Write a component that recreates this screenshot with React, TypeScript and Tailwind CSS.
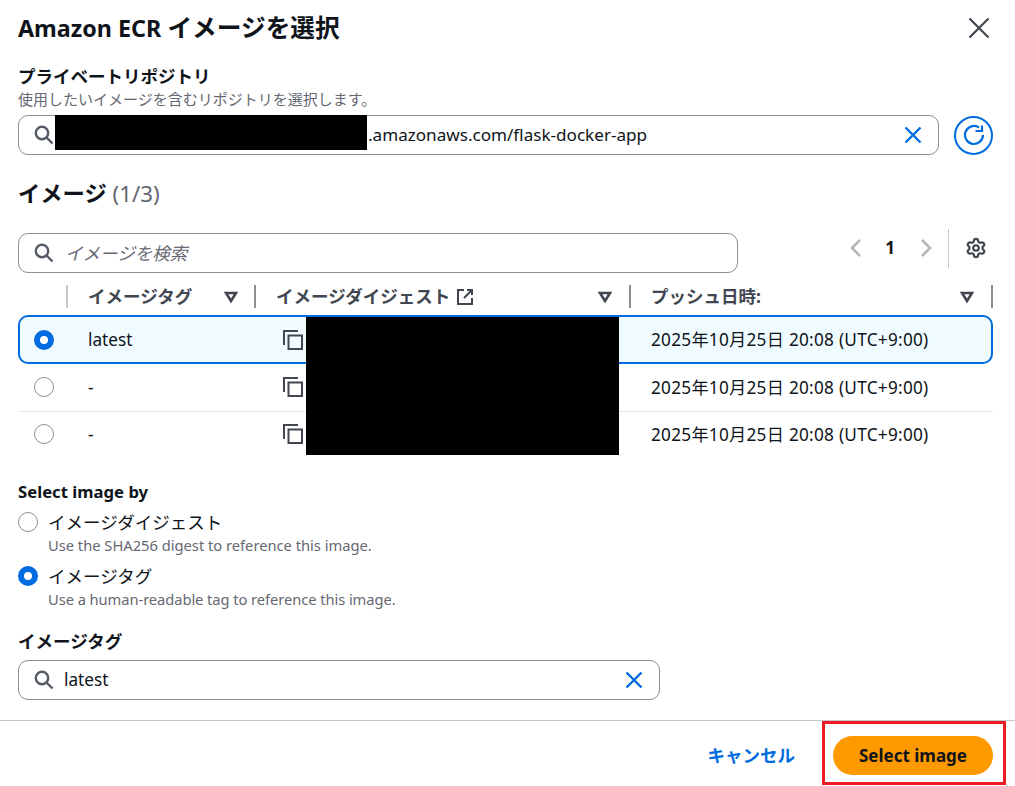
import { Settings } from "lucide-react";

const font = '"Noto Sans", "Noto Sans CJK JP", sans-serif';

function SearchIcon() {
  return (
    <svg width="20" height="20" viewBox="0 0 20 20" fill="none" stroke="#545b64" strokeWidth="2.4" className="shrink-0">
      <circle cx="8" cy="8" r="6.2" />
      <path d="M12.5 12.5 L18.5 18.5" />
    </svg>
  );
}

function ClearIcon() {
  return (
    <svg width="20" height="20" viewBox="0 0 20 20" fill="none" stroke="#006ce0" strokeWidth="2.4" className="shrink-0">
      <path d="M2.5 2.5 L17.5 17.5 M17.5 2.5 L2.5 17.5" />
    </svg>
  );
}

function SortIcon() {
  return (
    <svg width="14" height="12" viewBox="0 0 14 12" fill="none" stroke="#424650" strokeWidth="2.6" className="shrink-0">
      <path d="M2 2 H12 L7 10 Z" />
    </svg>
  );
}

function CopyIcon() {
  return (
    <svg width="20" height="20" viewBox="0 0 20 20" fill="none" stroke="#424650" strokeWidth="2" className="shrink-0">
      <path d="M1 15 V1 H15" />
      <rect x="5.5" y="5.5" width="13.5" height="13.5" />
    </svg>
  );
}

function Radio({ checked }: { checked?: boolean }) {
  if (checked) {
    return <span className="block h-5 w-5 shrink-0 rounded-full border-[6px] border-[#006ce0] bg-white" />;
  }
  return <span className="block h-5 w-5 shrink-0 rounded-full border border-[#8c8c94] bg-white" />;
}

function Divider({ light }: { light?: boolean }) {
  return <span className={`block h-[23px] w-[2px] shrink-0 ${light ? "bg-[#c6c6cd]" : "bg-[#8c8c94]"}`} />;
}

function Row({ tag, selected, last }: { tag: string; selected?: boolean; last?: boolean }) {
  return (
    <div
      className={`grid grid-cols-[49px_188px_375px_1fr] items-center text-[17.2px] text-[#0f141a] ${
        selected
          ? "h-[49px] rounded-[10px] border-2 border-[#006ce0] bg-[#f0fbff]"
          : last
            ? "h-[46px] pb-[2px]"
            : "h-[48px] border-b border-[#e8e8ea] pb-px"
      }`}
    >
      <div className={`flex ${selected ? "pl-[14px]" : "pl-[16px]"}`}>
        <Radio checked={selected} />
      </div>
      <div className={`pt-px ${selected ? "pl-[19px]" : "pl-[21px]"}`}>{tag}</div>
      <div className={`flex ${selected ? "pl-[26px]" : "pl-[28px]"}`}>
        <CopyIcon />
      </div>
      <div className={`whitespace-nowrap pt-px tracking-[0.27px] ${selected ? "pl-[19px]" : "pl-[21px]"}`}>
        2025年10月25日 20:08 (UTC+9:00)
      </div>
    </div>
  );
}

export default function App() {
  return (
    <div className="relative flex h-[786px] w-[1015px] flex-col overflow-hidden bg-white" style={{ fontFamily: font }}>
      {/* Header */}
      <div className="flex h-[56px] shrink-0 items-center justify-between pl-[18px] pr-[25px]">
        <h1 className="text-[23.3px] font-bold leading-none text-[#0f141a]">
          Amazon ECR <span className="text-[24.7px]">イメージを選択</span>
        </h1>
        <svg width="22" height="22" viewBox="0 0 22 22" fill="none" stroke="#424650" strokeWidth="2.2">
          <path d="M1.5 1.5 L20.5 20.5 M20.5 1.5 L1.5 20.5" />
        </svg>
      </div>

      <div className="flex flex-col px-[18px]">
        {/* Repository */}
        <div className="mt-[8px] text-[17.5px] font-bold leading-[24px] text-[#0f141a]">プライベートリポジトリ</div>
        <div className="mt-[3px] text-[15px] leading-[16px] text-[#656871]">使用したいイメージを含むリポジトリを選択します。</div>
        <div className="mt-[8px] flex items-center gap-[15px]">
          <div className="flex h-[40px] w-[921px] items-center justify-between rounded-[10px] border border-[#8c8c94] pl-[15px] pr-[15px]">
            <div className="flex items-center">
              <SearchIcon />
              <span className="ml-[314px] text-[17.1px] text-[#0f141a]">.amazonaws.com/flask-docker-app</span>
            </div>
            <ClearIcon />
          </div>
          <div className="flex h-[39px] w-[39px] items-center justify-center rounded-full border-2 border-[#006ce0]">
            <svg width="22" height="22" viewBox="0 0 22 22" fill="none" stroke="#006ce0" strokeWidth="2.2">
              <path d="M20 11 A9 9 0 1 1 16 3.5" />
              <path d="M12.5 7 H19 V1.5" />
            </svg>
          </div>
        </div>

        {/* Images */}
        <div className="mt-[25px] text-[22.3px] leading-[28px] text-[#0f141a]">
          <span className="font-bold">イメージ</span> <span className="text-[#656871]">(1/3)</span>
        </div>
        <div className="mt-[25px] flex h-[40px] items-center justify-between">
          <div className="flex h-[40px] w-[720px] items-center gap-[11px] rounded-[10px] border border-[#8c8c94] pl-[15px]">
            <SearchIcon />
            <span className="text-[17.5px] italic text-[#656871]">イメージを検索</span>
          </div>
          <div className="-mt-[10px] flex items-center">
            <svg width="24" height="24" viewBox="0 0 24 24" fill="none" stroke="#b4b4bb" strokeWidth="2.5">
              <path d="M16 4 L8 12 L16 20" />
            </svg>
            <span className="ml-[17px] mr-[19px] text-[17.2px] font-bold leading-none text-[#0f141a]">1</span>
            <svg width="24" height="24" viewBox="0 0 24 24" fill="none" stroke="#b4b4bb" strokeWidth="2.5">
              <path d="M8 4 L16 12 L8 20" />
            </svg>
            <span className="ml-[10px] mr-[16px] block h-[39px] w-px bg-[#c6c6cd]" />
            <Settings size={22} strokeWidth={2.4} className="mr-[10px] text-[#424650]" />
          </div>
        </div>

        {/* Table header */}
        <div className="mt-[12px] grid h-[23px] w-[975px] grid-cols-[50px_188px_375px_1fr] items-center text-[17.5px] font-bold leading-[23px] text-[#424650]">
          <div className="flex justify-end">
            <Divider light />
          </div>
          <div className="flex items-center justify-between pl-[20px]">
            <span>イメージタグ</span>
            <span className="flex items-center gap-[16px]">
              <SortIcon />
              <Divider />
            </span>
          </div>
          <div className="flex items-center justify-between pl-[20px]">
            <span className="flex items-center gap-[6px]">
              イメージダイジェスト
              <svg width="18" height="18" viewBox="0 0 18 18" fill="none" stroke="#424650" strokeWidth="2">
                <path d="M8 2 H2 V16 H16 V10" />
                <path d="M11 2 H16 V7 M16 2 L8 10" />
              </svg>
            </span>
            <span className="flex items-center gap-[17px]">
              <SortIcon />
              <Divider />
            </span>
          </div>
          <div className="flex items-center justify-between pl-[20px]">
            <span>プッシュ日時:</span>
            <span className="flex items-center gap-[17px]">
              <SortIcon />
              <Divider />
            </span>
          </div>
        </div>

        {/* Table rows */}
        <div className="mt-[7px] w-[975px]">
          <Row tag="latest" selected />
          <Row tag="-" />
          <Row tag="-" last />
        </div>

        {/* Select image by */}
        <div className="mt-[22px] text-[16.7px] font-bold leading-[24px] text-[#0f141a]">Select image by</div>
        <div className="mt-[7px] flex items-center gap-[10px] text-[17.5px] leading-[22px] text-[#0f141a]">
          <Radio />
          <span>イメージダイジェスト</span>
        </div>
        <div className="ml-[30px] text-[14.7px] leading-[24px] text-[#656871]">Use the SHA256 digest to reference this image.</div>
        <div className="mt-[8px] flex items-center gap-[10px] text-[17.5px] leading-[22px] text-[#0f141a]">
          <Radio checked />
          <span>イメージタグ</span>
        </div>
        <div className="ml-[30px] text-[14.7px] leading-[24px] tracking-[-0.06px] text-[#656871]">Use a human-readable tag to reference this image.</div>

        <div className="mt-[18px] text-[17.5px] font-bold leading-[24px] text-[#0f141a]">イメージタグ</div>
        <div className="mt-[7px] flex h-[40px] w-[642px] items-center rounded-[10px] border border-[#8c8c94] px-[15px]">
          <SearchIcon />
          <span className="ml-[10px] flex-1 text-[17.2px] text-[#0f141a]">latest</span>
          <ClearIcon />
        </div>
      </div>

      {/* Footer */}
      <div className="mt-[20px] flex h-[66px] shrink-0 items-center justify-end gap-[38px] border-t border-[#c6c6cd] pr-[22px] pt-[4px]">
        <span className="text-[17.5px] font-bold text-[#006ce0]">キャンセル</span>
        <button className="h-[39px] w-[160px] rounded-full bg-[#ff9900] text-[17px] font-bold text-[#0f141a]">Select image</button>
      </div>

      {/* Redactions and the red highlight over the page */}
      <div className="absolute left-[55px] top-[115px] h-[35px] w-[312px] bg-black" />
      <div className="absolute left-[306px] top-[317px] h-[138px] w-[313px] bg-black" />
      <div className="absolute left-[822px] top-[721px] h-[64px] w-[184px] border-[3px] border-[#ed1c24]" />
    </div>
  );
}
